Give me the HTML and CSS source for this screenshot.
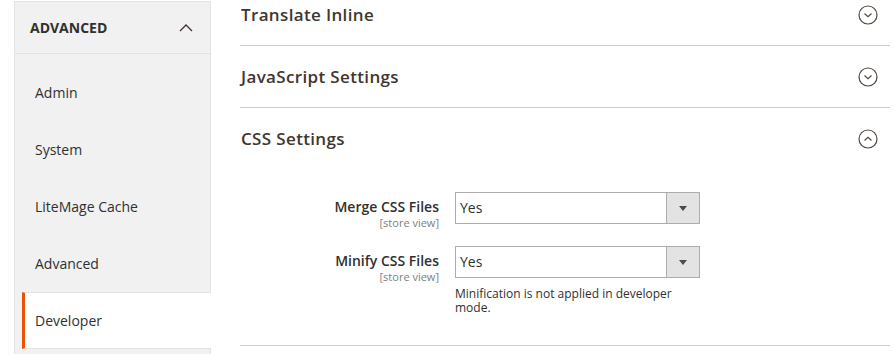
FILE: index.html
```html
<!DOCTYPE html>
<html lang="en">
<head>
<meta charset="utf-8">
<title>Developer configuration</title>
<link rel="stylesheet" href="styles.css">
</head>
<body>
<div class="page">
  <nav class="nav">
    <div class="nav-head">
      <span class="nav-title">Advanced</span>
      <svg class="nav-chevron" width="14" height="8" viewBox="0 0 14 8"><path d="M1 7 L7 1 L13 7" fill="none" stroke="#41362f" stroke-width="1.3"/></svg>
    </div>
    <ul class="nav-list">
      <li class="nav-item">Admin</li>
      <li class="nav-item">System</li>
      <li class="nav-item">LiteMage Cache</li>
      <li class="nav-item">Advanced</li>
      <li class="nav-item is-active">Developer</li>
    </ul>
  </nav>
  <main class="main">
    <section class="section">
      <div class="section-head">
        <h2 class="section-title">Translate Inline</h2>
        <svg class="toggle" width="20" height="20" viewBox="0 0 20 20"><circle cx="10" cy="10" r="9" fill="none" stroke="#514943" stroke-width="1.2"/><path d="M6.5 8.5 L10 11.8 L13.5 8.5" fill="none" stroke="#514943" stroke-width="1.2"/></svg>
      </div>
    </section>
    <section class="section">
      <div class="section-head">
        <h2 class="section-title">JavaScript Settings</h2>
        <svg class="toggle" width="20" height="20" viewBox="0 0 20 20"><circle cx="10" cy="10" r="9" fill="none" stroke="#514943" stroke-width="1.2"/><path d="M6.5 8.5 L10 11.8 L13.5 8.5" fill="none" stroke="#514943" stroke-width="1.2"/></svg>
      </div>
    </section>
    <section class="section">
      <div class="section-head">
        <h2 class="section-title">CSS Settings</h2>
        <svg class="toggle" width="20" height="20" viewBox="0 0 20 20"><circle cx="10" cy="10" r="9" fill="none" stroke="#514943" stroke-width="1.2"/><path d="M6.5 11.5 L10 8.2 L13.5 11.5" fill="none" stroke="#514943" stroke-width="1.2"/></svg>
      </div>
      <div class="fieldset">
        <div class="field">
          <div class="field-label">
            <span class="label-text">Merge CSS Files</span>
            <span class="scope">[store view]</span>
          </div>
          <div class="field-control">
            <div class="select"><span class="select-value">Yes</span><span class="select-btn"><span class="caret"></span></span></div>
          </div>
        </div>
        <div class="field">
          <div class="field-label">
            <span class="label-text">Minify CSS Files</span>
            <span class="scope">[store view]</span>
          </div>
          <div class="field-control">
            <div class="select"><span class="select-value">Yes</span><span class="select-btn"><span class="caret"></span></span></div>
            <p class="note">Minification is not applied in developer mode.</p>
          </div>
        </div>
      </div>
    </section>
  </main>
</div>
</body>
</html>
```
FILE: styles.css
```css
* { box-sizing: border-box; }
html, body { margin: 0; padding: 0; background: #fff; }
body {
  font-family: "Open Sans", "Liberation Sans", sans-serif;
  color: #303030;
  font-size: 14px;
  overflow: hidden;
  height: 354px;
}
.page {
  display: flex;
  align-items: flex-start;
  gap: 29px;
  padding-left: 14px;
}
.nav {
  width: 197px;
  flex: none;
  margin-top: 1px;
  background: #f1f1f1;
  border: 1px solid #e3e3e3;
  border-bottom: none;
  min-height: 360px;
}
.nav-head {
  height: 52px;
  border-bottom: 1px solid #e3e3e3;
  display: flex;
  align-items: center;
  justify-content: space-between;
  padding: 0 17px 0 15px;
}
.nav-title {
  font-weight: 700;
  text-transform: uppercase;
  font-size: 14px;
  color: #303030;
}
.nav-chevron { display: block; }
.nav-list {
  list-style: none;
  margin: 0;
  padding: 10px 0 0;
}
.nav-item {
  height: 57px;
  margin-left: 7px;
  border-left: 3px solid transparent;
  border-top: 1px solid transparent;
  border-bottom: 1px solid transparent;
  padding-left: 10px;
  display: flex;
  align-items: center;
  font-size: 14px;
  color: #303030;
}
.nav-item.is-active {
  background: #fff;
  border-left-color: #eb5202;
  border-top-color: #e3e3e3;
  border-bottom-color: #e3e3e3;
  margin-right: -1px;
}
.main {
  width: 650px;
  flex: none;
  margin-top: -16px;
}
.section {
  border-bottom: 1px solid #cccccc;
}
.section-head {
  display: flex;
  align-items: center;
  justify-content: space-between;
  padding: 21px 12px 20px 1px;
}
.section-title {
  margin: 0;
  font-size: 17px;
  line-height: 20px;
  font-weight: 600;
  letter-spacing: 0.35px;
  color: #41362f;
}
.toggle { display: block; }
.fieldset {
  padding: 23px 0 30px;
}
.field {
  display: grid;
  grid-template-columns: 199px 245px;
  column-gap: 16px;
  margin-bottom: 17px;
}
.field:last-child { margin-bottom: 0; }
.field-label {
  display: flex;
  flex-direction: column;
  align-items: flex-end;
  padding-top: 7px;
}
.label-text {
  font-weight: 600;
  font-size: 14px;
  line-height: 16px;
  color: #303030;
}
.scope {
  margin-top: 1px;
  font-size: 11px;
  line-height: 13px;
  color: #808080;
}
.select {
  height: 32px;
  border: 1px solid #adadad;
  display: flex;
  background: #fff;
}
.select-value {
  flex: 1;
  padding-left: 4px;
  line-height: 30px;
  font-size: 14px;
  color: #303030;
}
.select-btn {
  width: 33px;
  background: #e3e3e3;
  border-left: 1px solid #adadad;
  display: flex;
  align-items: center;
  justify-content: center;
}
.caret {
  width: 0;
  height: 0;
  border-left: 4px solid transparent;
  border-right: 4px solid transparent;
  border-top: 5px solid #514943;
}
.note {
  margin: 9px 0 0;
  font-size: 12px;
  line-height: 14px;
  color: #303030;
}
```
